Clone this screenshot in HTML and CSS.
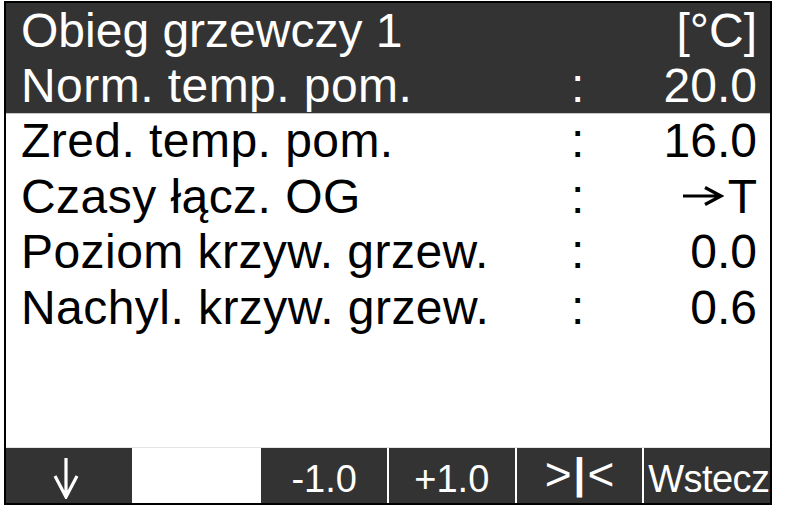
FILE: index.html
```html
<!DOCTYPE html>
<html lang="pl">
<head>
<meta charset="utf-8">
<title>Obieg grzewczy 1</title>
<link rel="stylesheet" href="styles.css">
</head>
<body>
<div class="screen">
  <div class="header">
    <div class="row title">
      <span class="label">Obieg grzewczy 1</span>
      <span class="unit">[°C]</span>
    </div>
    <div class="row">
      <span class="label">Norm. temp. pom.</span>
      <span class="colon">:</span>
      <span class="value">20.0</span>
    </div>
  </div>
  <div class="list">
    <div class="row">
      <span class="label">Zred. temp. pom.</span>
      <span class="colon">:</span>
      <span class="value">16.0</span>
    </div>
    <div class="row">
      <span class="label">Czasy łącz. OG</span>
      <span class="colon">:</span>
      <span class="value"><svg class="arrow-right" width="42" height="20" viewBox="0 0 42 20"><path d="M1 10H39M23 1.5L39 10L23 18.5" fill="none" stroke="#000" stroke-width="3.2"/></svg>T</span>
    </div>
    <div class="row">
      <span class="label">Poziom krzyw. grzew.</span>
      <span class="colon">:</span>
      <span class="value">0.0</span>
    </div>
    <div class="row">
      <span class="label">Nachyl. krzyw. grzew.</span>
      <span class="colon">:</span>
      <span class="value">0.6</span>
    </div>
  </div>
  <div class="softkeys">
    <div class="key"><svg class="arrow-down" width="26" height="42" viewBox="0 0 26 42"><path d="M13 1V39M2 19L13 40L24 19" fill="none" stroke="#fff" stroke-width="3.2"/></svg></div>
    <div class="key empty"></div>
    <div class="key">-1.0</div>
    <div class="key">+1.0</div>
    <div class="key big">&gt;<b>|</b>&lt;</div>
    <div class="key wide">Wstecz</div>
  </div>
</div>
</body>
</html>
```
FILE: styles.css
```css
html, body {
  margin: 0;
  padding: 0;
  background: #fff;
}
body {
  font-family: "Liberation Sans", Arial, sans-serif;
}
.screen {
  margin: 1px 0 0 4px;
  width: 764px;
  height: 500px;
  border: 2px solid #000;
  display: flex;
  flex-direction: column;
  overflow: hidden;
}
.header {
  background: #333;
  color: #fff;
  box-shadow: 0 1px 0 #c8c8c8;
}
.header .row {
  height: 55px;
  line-height: 55px;
}
.row {
  display: grid;
  grid-template-columns: 1fr 13px 173px;
  padding: 0 13px 0 15px;
  font-size: 48px;
  line-height: 55.6px;
  height: 55.6px;
  white-space: nowrap;
}
.row .label {
  letter-spacing: 0.45px;
}
.row.title {
  display: flex;
  justify-content: space-between;
}
.row.title .label {
  letter-spacing: 0;
}
.value {
  text-align: right;
}
.arrow-right {
  vertical-align: 0;
  margin-right: 4px;
  position: relative;
  top: -7px;
}
.list {
  color: #000;
}
.softkeys {
  margin-top: auto;
  height: 55px;
  display: grid;
  grid-template-columns: repeat(6, 1fr);
  column-gap: 2px;
  box-shadow: 0 -1px 0 #e4e4e4;
}
.key {
  background: #333;
  color: #fff;
  font-size: 38px;
  line-height: 44px;
  padding-top: 9px;
  text-align: center;
  overflow: hidden;
  white-space: nowrap;
  display: flex;
  justify-content: center;
  align-items: flex-start;
}
.key.big {
  font-size: 46px;
  line-height: 44px;
  padding-top: 4px;
}
.key.big b {
  font-weight: bold;
  font-size: 42px;
  margin: 0 2px;
}
.key.wide {
  justify-content: flex-start;
  padding-left: 4px;
  letter-spacing: -0.6px;
}
.key.empty {
  background: #fff;
}
.arrow-down {
  margin-top: 0;
  margin-left: -5px;
}
```
